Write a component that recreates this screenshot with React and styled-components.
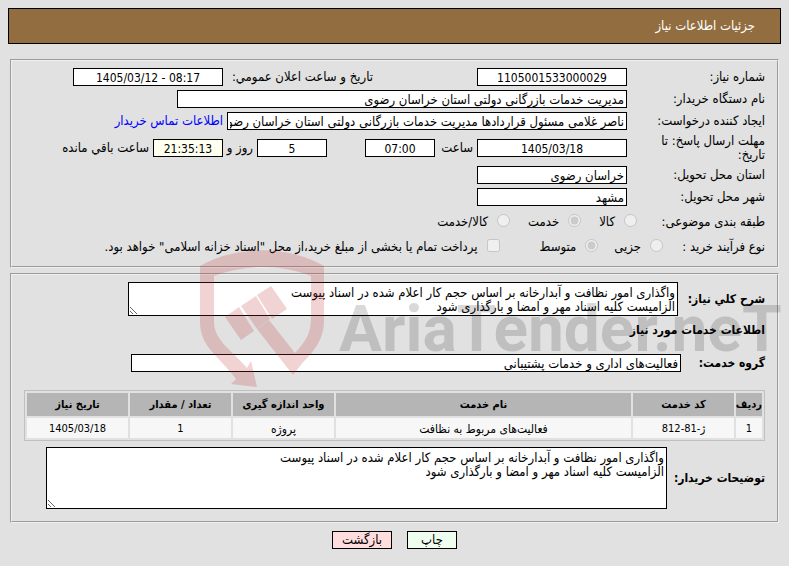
import React from 'react';
import styled, { createGlobalStyle } from 'styled-components';

const GlobalStyle = createGlobalStyle`
  * {
    box-sizing: border-box;
  }
  body {
    margin: 8px;
    background: #e1e1e1;
    color: #000;
    font-family: 'DejaVu Sans Condensed', 'DejaVu Sans', sans-serif;
    font-size: 13px;
    line-height: 14px;
  }
`;

const Page = styled.div`
  position: relative;
`;

const TitleBar = styled.header`
  height: 36px;
  padding: 0 25px;
  display: flex;
  align-items: center;
  background: #916d40;
  border: 1px solid #000;
  color: #fff;
`;

const Title = styled.h1`
  margin: 0;
  font-size: 13px;
  font-weight: normal;
`;

/* Panels */
const Panel = styled.section`
  margin: ${(props) => props.$top}px 2px 0;
  padding: ${(props) => props.$pad};
  border: 2px groove #f0f0f0;
`;

const Row = styled.div`
  display: flex;
  align-items: center;
  min-height: ${(props) => props.$height || 22}px;
`;

const Label = styled.label`
  flex: none;
  width: ${(props) => props.$width}px;
  padding-left: ${(props) => props.$gap || 0}px;
  font-size: ${(props) => (props.$bold ? 12 : 13)}px;
  font-weight: ${(props) => (props.$bold ? 'bold' : 'normal')};
`;

const Field = styled.input`
  flex: 0 1 ${(props) => props.$width}px;
  min-width: 0;
  width: ${(props) => props.$width}px;
  height: 18px;
  margin: 0 ${(props) => props.$before || 0}px 0 0;
  padding: 1px 2px 0;
  border: 1px solid #000;
  border-radius: 0;
  background: ${(props) => props.$tint || '#fff'};
  color: #000;
  font: inherit;
  font-size: ${(props) => (props.$center ? 12 : 13)}px;
  text-align: ${(props) => (props.$center ? 'center' : 'right')};
`;

const Note = styled.label`
  flex: none;
  width: ${(props) => (props.$width ? `${props.$width}px` : 'auto')};
  margin-right: ${(props) => props.$before || 0}px;
  padding-right: 4px;
`;

const ContactLink = styled.a`
  padding-right: 4px;
  color: #0000ff;
  text-decoration: none;
  white-space: nowrap;
`;

/* Radio and checkbox choices */
const Choice = styled.label`
  display: flex;
  align-items: center;
  gap: 9px;
  margin-left: ${(props) => props.$after || 0}px;
  white-space: nowrap;
`;

const Tick = styled.input`
  flex: none;
  width: 13px;
  height: 13px;
  margin: 0 0 4px;
`;

const Area = styled.textarea`
  display: block;
  flex: 0 1 ${(props) => props.$width}px;
  width: ${(props) => props.$width}px;
  height: ${(props) => props.$height}px;
  margin: 0;
  padding: 3px 2px 2px;
  border: 1px solid #000;
  background: #fff;
  color: #000;
  font: inherit;
  overflow: hidden;
  resize: both;
`;

const Heading = styled.h2`
  margin: 7px 0 17px;
  font-size: 12px;
  font-weight: bold;
`;

/* Items table */
const ItemsTable = styled.table`
  width: 100%;
  margin: 18px 0 6px;
  table-layout: fixed;
  border: 1px solid #c0c0c0;
  border-collapse: separate;
  border-spacing: 2px;
  font-size: 11px;
  text-align: center;
`;

const HeadCell = styled.th`
  width: ${(props) => (props.$width ? `${props.$width}px` : 'auto')};
  height: 23px;
  padding: 1px 0 0;
  background: #b5b5b5;
  white-space: nowrap;
`;

const Cell = styled.td`
  height: 20px;
  padding: 2px 0 0;
  background: #f7f7f7;
  font-size: ${(props) => (props.$wordy ? 12 : 11)}px;
`;

const Actions = styled.footer`
  display: flex;
  justify-content: center;
  gap: 15px;
  margin-top: 8px;
`;

const ActionButton = styled.button`
  width: ${(props) => props.$width}px;
  height: 18px;
  padding: 0;
  border: 1px solid #000;
  background: ${(props) => props.$tint};
  color: #000;
  font: inherit;
  cursor: pointer;
`;

/* The watermark lies over both panels */
const Mark = styled.svg`
  position: absolute;
  top: 236px;
  left: 190px;
  width: 591px;
  height: 160px;
  overflow: visible;
  pointer-events: none;
`;

const columns = [
  { title: 'ردیف', width: 26 },
  { title: 'کد خدمت', width: 101 },
  { title: 'نام خدمت', wordy: true },
  { title: 'واحد اندازه گیری', width: 101, wordy: true },
  { title: 'تعداد / مقدار', width: 101 },
  { title: 'تاریخ نیاز', width: 101 },
];

const items = [['1', 'ژ-81-812', 'فعالیت‌های مربوط به نظافت', 'پروژه', '1', '1405/03/18']];

const summary =
  'واگذاری امور نظافت و آبدارخانه بر اساس حجم کار اعلام شده در اسناد پیوست\nالزامیست کلیه اسناد مهر و امضا و بارگذاری شود';

const Watermark = () => (
  <Mark viewBox="198 244 591 160" aria-hidden="true">
    <g fill="#c1272d" opacity="0.2">
      {/* shield with the arrow at its left foot */}
      <path d="M200 266C236 245 288 245 324 266V320C324 343 311 353 300 366L293 375L257 329L269 320L295 353C306 341 311 333 311 318V276C280 264 245 264 214 276V322C214 341 234 352 247 368L251 361L257 387L231 384L236 379C219 356 200 347 200 322Z" />
      {/* gavel */}
      <path d="M225 317L239 307L254 331L241 340ZM241 306L256 296L270 319L257 329ZM257 295L271 286L287 309L272 319Z" />
    </g>
    <text
      x="339"
      y="351"
      fill="#000"
      fillOpacity="0.15"
      fontFamily="Roboto, sans-serif"
      fontWeight="bold"
      fontSize="64"
      direction="ltr"
    >
      AriaTender.neT
    </text>
  </Mark>
);

function App() {
  return (
    <>
      <GlobalStyle />
      <Page dir="rtl" lang="fa">
        <TitleBar>
          <Title>جزئیات اطلاعات نیاز</Title>
        </TitleBar>

        <Panel $top={15} $pad="5px 12px 8px 12px">
          <Row>
            <Label $width={138} htmlFor="number">شماره نیاز:</Label>
            <Field $width={150} $center id="number" readOnly value="1105001533000029" />
            <Note $width={154} $before={100} htmlFor="announced">تاریخ و ساعت اعلان عمومي:</Note>
            <Field $width={150} $center id="announced" dir="ltr" readOnly value="1405/03/12 - 08:17" />
          </Row>
          <Row>
            <Label $width={138} htmlFor="buyer">نام دستگاه خریدار:</Label>
            <Field $width={450} id="buyer" readOnly value="مدیریت خدمات بازرگانی دولتی استان خراسان رضوی" />
          </Row>
          <Row>
            <Label $width={138} htmlFor="creator">ایجاد کننده درخواست:</Label>
            <Field
              $width={400}
              id="creator"
              readOnly
              value="ناصر غلامی مسئول قراردادها مدیریت خدمات بازرگانی دولتی استان خراسان رضوی"
            />
            <ContactLink href="#contact">اطلاعات تماس خریدار</ContactLink>
          </Row>
          <Row $height={32}>
            <Label $width={138} $gap={24} htmlFor="deadline">مهلت ارسال پاسخ: تا تاریخ:</Label>
            <Field $width={150} $center id="deadline" readOnly value="1405/03/18" />
            <Note $width={42} htmlFor="hour">ساعت</Note>
            <Field $width={70} $center id="hour" readOnly value="07:00" />
            <Field $width={70} $center $before={38} id="days" readOnly value="5" />
            <Note $width={34} htmlFor="days">روز و</Note>
            <Field $width={70} $center $tint="#ffffef" id="left" readOnly value="21:35:13" />
            <Note htmlFor="left">ساعت باقي مانده</Note>
          </Row>
          <Row>
            <Label $width={138} htmlFor="province">استان محل تحویل:</Label>
            <Field $width={150} id="province" readOnly value="خراسان رضوی" />
          </Row>
          <Row>
            <Label $width={138} htmlFor="city">شهر محل تحویل:</Label>
            <Field $width={150} id="city" readOnly value="مشهد" />
          </Row>
          <Row $height={28}>
            <Label as="span" $width={128}>طبقه بندی موضوعی:</Label>
            <Choice $after={18}>
              <Tick type="radio" name="kind" disabled />
              کالا
            </Choice>
            <Choice $after={18}>
              <Tick type="radio" name="kind" disabled defaultChecked />
              خدمت
            </Choice>
            <Choice>
              <Tick type="radio" name="kind" disabled />
              کالا/خدمت
            </Choice>
          </Row>
          <Row>
            <Label as="span" $width={102}>نوع فرآیند خرید :</Label>
            <Choice $after={16}>
              <Tick type="radio" name="process" disabled />
              جزیی
            </Choice>
            <Choice $after={40}>
              <Tick type="radio" name="process" disabled defaultChecked />
              متوسط
            </Choice>
            <Choice>
              <Tick type="checkbox" disabled />
              پرداخت تمام یا بخشی از مبلغ خرید،از محل "اسناد خزانه اسلامی" خواهد بود.
            </Choice>
          </Row>
        </Panel>

        <Panel $top={5} $pad="7px 12px 12px 12px">
          <Row>
            <Label $bold $width={87} htmlFor="summary">شرح کلي نیاز:</Label>
            <Area $width={550} $height={34} id="summary" readOnly value={summary} />
          </Row>
          <Heading>اطلاعات خدمات مورد نیاز</Heading>
          <Row $height={18}>
            <Label $bold $width={84} htmlFor="group">گروه خدمت:</Label>
            <Field $width={550} id="group" readOnly value="فعالیت‌های اداری و خدمات پشتیبانی" />
          </Row>
          <ItemsTable>
            <thead>
              <tr>
                {columns.map((column) => (
                  <HeadCell key={column.title} $width={column.width}>{column.title}</HeadCell>
                ))}
              </tr>
            </thead>
            <tbody>
              {items.map((item) => (
                <tr key={item[0]}>
                  {item.map((value, index) => (
                    <Cell key={columns[index].title} $wordy={columns[index].wordy}>{value}</Cell>
                  ))}
                </tr>
              ))}
            </tbody>
          </ItemsTable>
          <Row>
            <Label $bold $width={98} htmlFor="notes">توضیحات خریدار:</Label>
            <Area $width={621} $height={62} id="notes" readOnly value={summary} />
          </Row>
        </Panel>

        <Actions>
          <ActionButton type="button" $width={50} $tint="#efffef">چاپ</ActionButton>
          <ActionButton type="button" $width={60} $tint="#ffdddd">بازگشت</ActionButton>
        </Actions>
        <Watermark />
      </Page>
    </>
  );
}

export default App;
